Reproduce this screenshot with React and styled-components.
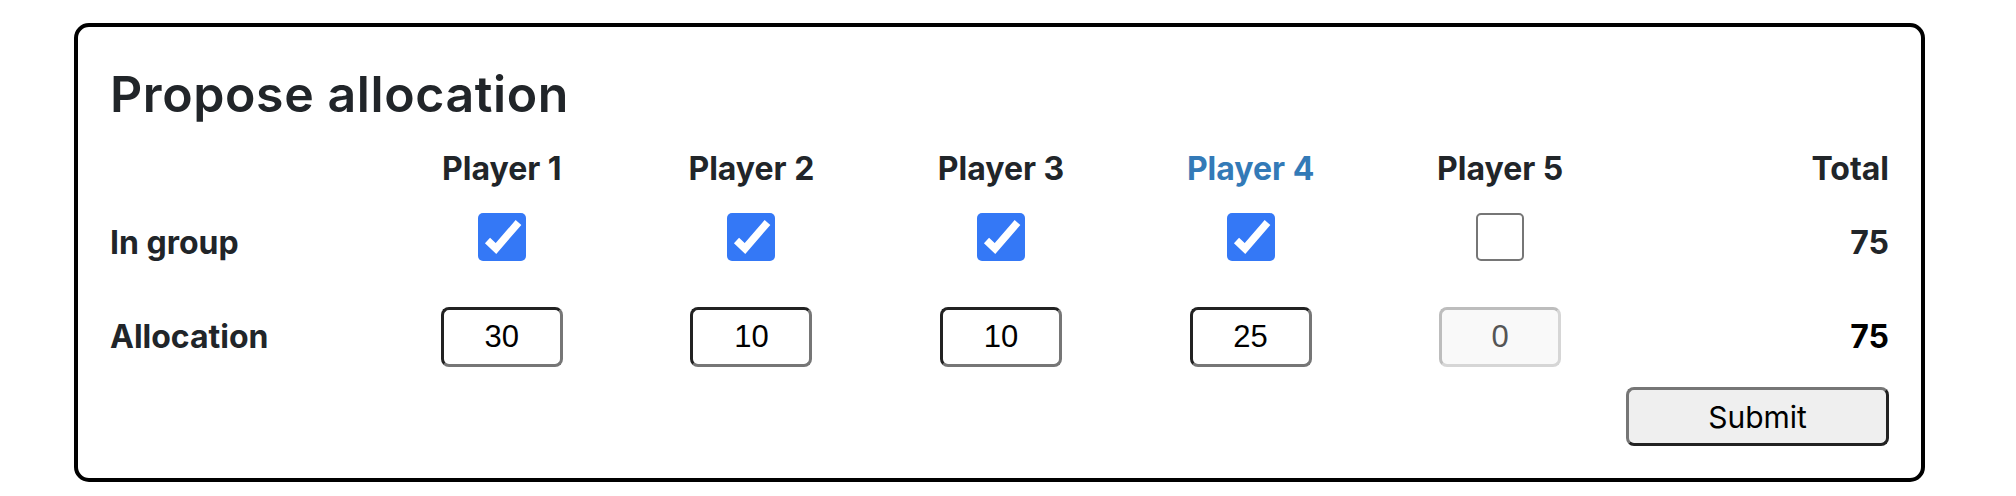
import React, { useState } from 'react';
import styled, { createGlobalStyle } from 'styled-components';

const GlobalStyle = createGlobalStyle`
    body {
        margin: 0;
        background: #fff;
        font-family: Inter, "Noto Sans", sans-serif;
        color: #212529;
    }
`;

const Card = styled.div`
    box-sizing: border-box;
    width: 1851px;
    margin: 23px 0 0 74px;
    padding: 32px;
    border: 4px solid #000;
    border-radius: 15px;
`;

const Title = styled.h2`
    margin: 6px 0 0 0;
    font-size: 50px;
    line-height: 58px;
    font-weight: 560;
    letter-spacing: 0.6px;
    color: #212529;
`;

const Row = styled.div`
    display: grid;
    grid-template-columns: 267px repeat(5, 1fr) 264px;
    align-items: center;
    height: ${p => p.$height}px;
    margin-top: ${p => p.$gap}px;
`;

const RowLabel = styled.div`
    font-size: 32px;
    line-height: 38px;
    font-weight: 700;
    padding-top: ${p => p.$drop || 0}px;
`;

const ColHead = styled.div`
    font-size: 32px;
    line-height: 38px;
    font-weight: 700;
    text-align: center;
    color: ${p => (p.$active ? '#337ab7' : '#212529')};
`;

const Cell = styled.div`
    display: flex;
    justify-content: center;
`;

const TotalCell = styled.div`
    font-size: 32px;
    line-height: 38px;
    font-weight: 700;
    text-align: right;
    color: ${p => p.$color || '#212529'};
    padding-top: ${p => p.$drop || 0}px;
`;

const Box = styled.span`
    box-sizing: border-box;
    display: inline-flex;
    width: 48px;
    height: 48px;
    border-radius: 5px;
    cursor: pointer;
    background: ${p => (p.$checked ? '#3478f6' : '#fff')};
    border: ${p => (p.$checked ? 'none' : '2px solid #767676')};
`;

const AmountInput = styled.input`
    box-sizing: border-box;
    width: 122px;
    height: 60px;
    border: 3px solid;
    border-color: #222 #767676 #767676 #222;
    border-radius: 8px;
    background: #fff;
    color: #000;
    font-family: "Liberation Sans", Arial, sans-serif;
    font-size: 31px;
    text-align: center;
    padding: 0;
    outline: none;

    &:disabled {
        background: #f9f9f9;
        border-color: #bdbdbd #d6d6d6 #d6d6d6 #bdbdbd;
        color: #555;
    }
`;

const SubmitBtn = styled.button`
    box-sizing: border-box;
    width: 263px;
    height: 59px;
    justify-self: end;
    border: 3px solid;
    border-color: #767676 #222 #222 #767676;
    border-radius: 8px;
    background: #efefef;
    color: #000;
    font-family: Inter, "Noto Sans", sans-serif;
    font-size: 30px;
    cursor: pointer;
`;

const CheckBox = ({ checked, onToggle }) => (
    <Box $checked={checked} onClick={onToggle}>
        {checked &&
            <svg width="48" height="48" viewBox="0 0 48 48">
                <polyline points="9.5,27.5 18,35.5 40.5,9.5" fill="none" stroke="#fff" strokeWidth="7.5" />
            </svg>
        }
    </Box>
);

export default function App() {
    const [players, setPlayers] = useState([
        { name: 'Player 1', inGroup: true, amount: 30 },
        { name: 'Player 2', inGroup: true, amount: 10 },
        { name: 'Player 3', inGroup: true, amount: 10 },
        { name: 'Player 4', inGroup: true, amount: 25, me: true },
        { name: 'Player 5', inGroup: false, amount: 0 },
    ]);

    const toggle = i => setPlayers(players.map((p, j) => (j === i ? { ...p, inGroup: !p.inGroup } : p)));
    const setAmount = (i, v) => setPlayers(players.map((p, j) => (j === i ? { ...p, amount: v } : p)));
    const total = players.reduce((s, p) => s + (p.inGroup ? Number(p.amount) || 0 : 0), 0);

    return (<>
        <GlobalStyle />
        <Card>
            <Title>Propose allocation</Title>
            <Row $height={38} $gap={27}>
                <div />
                {players.map(p => <ColHead key={p.name} $active={p.me}>{p.name}</ColHead>)}
                <TotalCell>Total</TotalCell>
            </Row>
            <Row $height={48} $gap={23}>
                <RowLabel $drop={13}>In group</RowLabel>
                {players.map((p, i) =>
                    <Cell key={p.name}><CheckBox checked={p.inGroup} onToggle={() => toggle(i)} /></Cell>
                )}
                <TotalCell $drop={13}>{total}</TotalCell>
            </Row>
            <Row $height={60} $gap={48}>
                <RowLabel>Allocation</RowLabel>
                {players.map((p, i) =>
                    <Cell key={p.name}>
                        <AmountInput value={p.amount} disabled={!p.inGroup} onChange={e => setAmount(i, e.target.value)} />
                    </Cell>
                )}
                <TotalCell $color="#000">{total}</TotalCell>
            </Row>
            <Row $height={59} $gap={20}>
                <div />
                <div /><div /><div /><div /><div />
                <SubmitBtn type="button">Submit</SubmitBtn>
            </Row>
        </Card>
    </>);
}
